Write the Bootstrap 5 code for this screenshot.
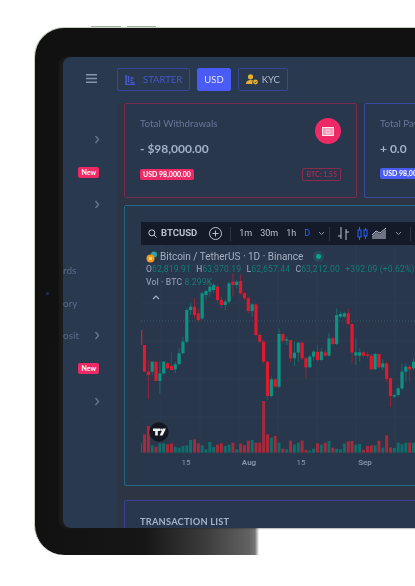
<!DOCTYPE html>
<html lang="en">
<head>
    <meta charset="UTF-8">
    <meta name="viewport" content="width=device-width, initial-scale=1.0">
    <title>Dashboard</title>
    <link href="https://cdn.jsdelivr.net/npm/bootstrap@5.3.0/dist/css/bootstrap.min.css" rel="stylesheet">
    <style>
        html, body { height: 586px; overflow: hidden; background: #fff; }
        body { font-family: Lato, "Open Sans", sans-serif; }
        .tablet-wrap { padding: 27px 0 0 34px; width: 415px; overflow: hidden; filter: blur(.45px); }
        .tablet {
            position: relative;
            width: 520px;
            height: 528px;
            padding: 29px 0 27px 28px;
            border-radius: 30px 0 0 30px;
            border-top: 1px solid #c4d0c0;
            border-left: 1px solid #c4d0c0;
            background:
                linear-gradient(#111, #111) top / 100% 60% no-repeat,
                linear-gradient(90deg, #111 0, #161616 110px, #3c3c3c 170px, #626262 214px, #747474 220px, transparent 224px) bottom / 100% 41% no-repeat;
        }
        .side-btn { position: absolute; top: -2px; height: 1px; background: #a4b2a2; }
        .side-btn-a { left: 56px; width: 30px; }
        .side-btn-b { left: 92px; width: 29px; }
        .camera { position: absolute; left: 11px; top: 264px; width: 3px; height: 3px; border-radius: 50%; background: #22305e; }
        .screen { height: 471px; border-radius: 8px 0 0 8px; overflow: hidden; background: #29394f; box-shadow: -4px 0 2px #1c1c1c; }
        .side-col { width: 54px; flex-shrink: 0; padding-top: 66px; }
        .menu-row { height: 32.75px; padding-right: 17px; font-size: 10px; color: #5a6b8a; }
        .menu-text { font-size: 10px; }
        .new-tag { background: #ee2a66; font-size: 7px; padding: 2px 3px; border-radius: 2px; font-weight: 700; margin-right: 1px; }
        .top-row { height: 46px; padding-top: 11px; }
        .top-gap { gap: 7px; }
        .top-btn { height: 23px; padding: 0 7px; font-size: 9.5px; line-height: 1; border: 1px solid #364698; border-radius: 2px; color: #4658cc; }
        .top-btn-on { background: #4a5cf5; border-color: #4a5cf5; color: #dfe3ff; padding: 0 6px; }
        .top-btn-kyc { color: #b3bdd0; }
        .main-col { flex-grow: 1; min-width: 0; }
        .body-area { height: 425px; padding: 0 0 0 7px; background: #2d3444; }
        .stat-card { width: 233px; height: 95px; flex-shrink: 0; padding: 12px 15px 0; background: #28374b; border-radius: 2px; border: 1px solid #7a2a50; }
        .stat-card-blue { border-color: #3a4aa0; }
        .stat-title { font-size: 9.8px; color: #67779a; }
        .stat-value { font-size: 12px; font-weight: 700; color: #a3b1c9; margin-top: 9px; }
        .coin-circle { width: 26px; height: 26px; background: #ee2a66; margin-top: 2px; }
        .stat-foot { margin-top: 10px; }
        .stat-tag { font-size: 7px; padding: 2px 3px; border-radius: 2px; background: #ee2a66; font-weight: 700; }
        .stat-tag-blue { background: #4a5cf5; }
        .stat-tag-line { font-size: 7px; padding: 2px 3px; border-radius: 2px; border: 1px solid #8a2a50; color: #a82a55; font-weight: 700; background: none; }
        .chart-card { width: 400px; height: 281px; margin-top: 7px; padding: 16px; background: #28374b; border: 1px solid #1d6a85; border-radius: 2px; }
        .chart-bar { height: 23px; padding-left: 7px; background: #141a27; color: #b9c1d0; font-size: 9.5px; font-family: Roboto, sans-serif; white-space: nowrap; }
        .bar-sep { width: 1px; height: 14px; background: #2e3442; }
        .bar-time { font-size: 9px; }
        .bar-on { color: #2962ff; }
        .bar-plus { margin: 0 8px 0 12px; }
        .chart-wrap { position: relative; height: 226px; }
        .chart-legend { position: absolute; left: 5px; top: 5px; font-family: Roboto, sans-serif; white-space: nowrap; }
        .legend-name { font-size: 10px; color: #a6afc2; line-height: 13px; }
        .legend-name svg { margin-right: 2px; }
        .legend-line { font-size: 8.6px; line-height: 13px; color: #8b96ac; letter-spacing: .12px; }
        .legend-line i { font-style: normal; color: #127f70; margin-right: 3px; }
        .legend-line b { font-weight: 500; }
        .legend-fold { margin: 6px 0 0 6px; }
        .live-dot { width: 5px; height: 5px; border-radius: 50%; background: #12a088; box-shadow: 0 0 0 3px rgba(18, 160, 136, .2); margin-left: 13px; }
        .list-card { width: 400px; height: 60px; margin-top: 14px; padding: 14px 15px; background: #28374b; border: 1px solid #3b3f9c; border-radius: 2px; }
        .list-title { font-size: 9.3px; font-weight: 700; color: #a3b1c9; letter-spacing: .2px; }
        .burger-icon { position: absolute; left: 51px; top: 46px; }
    </style>
</head>
<body>
    <div class="tablet-wrap">
        <div class="tablet">
            <span class="side-btn side-btn-a"></span>
            <span class="side-btn side-btn-b"></span>
            <span class="camera"></span>
            <svg class="burger-icon" width="11" height="9" viewBox="0 0 11 9"><path d="M0 .8h11M0 4.5h11M0 8.2h11" stroke="#8796ad" stroke-width="1.4"/></svg>
            <div class="screen d-flex">
                <div class="side-col">
                    <div class="menu-row d-flex align-items-center justify-content-end">
                        <svg width="6" height="9" viewBox="0 0 6 9"><path d="M1.5 1l3 3.5-3 3.5" fill="none" stroke="#66768f" stroke-width="1.4"/></svg>
                    </div>
                    <div class="menu-row d-flex align-items-center justify-content-end">
                        <span class="badge new-tag">New</span>
                    </div>
                    <div class="menu-row d-flex align-items-center justify-content-end">
                        <svg width="6" height="9" viewBox="0 0 6 9"><path d="M1.5 1l3 3.5-3 3.5" fill="none" stroke="#66768f" stroke-width="1.4"/></svg>
                    </div>
                    <div class="menu-row"></div>
                    <div class="menu-row d-flex align-items-center"><span class="menu-text">rds</span></div>
                    <div class="menu-row d-flex align-items-center"><span class="menu-text">ory</span></div>
                    <div class="menu-row d-flex align-items-center justify-content-between">
                        <span class="menu-text">osit</span>
                        <svg width="6" height="9" viewBox="0 0 6 9"><path d="M1.5 1l3 3.5-3 3.5" fill="none" stroke="#66768f" stroke-width="1.4"/></svg>
                    </div>
                    <div class="menu-row d-flex align-items-center justify-content-end">
                        <span class="badge new-tag">New</span>
                    </div>
                    <div class="menu-row d-flex align-items-center justify-content-end">
                        <svg width="6" height="9" viewBox="0 0 6 9"><path d="M1.5 1l3 3.5-3 3.5" fill="none" stroke="#66768f" stroke-width="1.4"/></svg>
                    </div>
                </div>
                <div class="main-col">
                    <div class="top-row d-flex top-gap">
                        <button class="btn top-btn d-flex align-items-center gap-1">
                            <svg width="10" height="10" viewBox="0 0 10 10" class="me-1"><path d="M1 0v9.5h9M3.5 1v6.5M5.5 3h3M5.5 5.3h2M5.5 7.5h4" fill="none" stroke="#4658cc" stroke-width="1.6"/></svg>
                            STARTER
                        </button>
                        <button class="btn top-btn top-btn-on">USD</button>
                        <button class="btn top-btn top-btn-kyc d-flex align-items-center gap-1">
                            <svg width="12" height="11" viewBox="0 0 12 11"><circle cx="4.5" cy="2.8" r="2.6" fill="#e6ae2c"/><path d="M0 10c0-3 2-4 4.5-4 1 0 2 .2 2.6.7A3 3 0 0 0 6.5 10z" fill="#e6ae2c"/><circle cx="9.5" cy="8" r="2.4" fill="#e6ae2c"/><path d="M8.5 8l.8.8 1.2-1.3" fill="none" stroke="#29394f" stroke-width=".8"/></svg>
                            KYC
                        </button>
                    </div>
                    <div class="body-area">
                        <div class="d-flex top-gap">
                            <div class="stat-card">
                                <div class="d-flex justify-content-between">
                                    <div>
                                        <div class="stat-title">Total Withdrawals</div>
                                        <div class="stat-value">- $98,000.00</div>
                                    </div>
                                    <div class="coin-circle rounded-circle d-flex align-items-center justify-content-center">
                                        <svg width="12" height="9" viewBox="0 0 12 9"><rect x=".5" y=".5" width="11" height="8" fill="#f59ab8" stroke="#ffe4ec"/><circle cx="6" cy="4.5" r="2" fill="none" stroke="#ffe4ec" stroke-width=".8"/></svg>
                                    </div>
                                </div>
                                <div class="d-flex justify-content-between align-items-center stat-foot">
                                    <span class="badge stat-tag">USD 98,000.00</span>
                                    <span class="badge stat-tag-line">BTC: 1.55</span>
                                </div>
                            </div>
                            <div class="stat-card stat-card-blue">
                                <div class="stat-title">Total Payouts</div>
                                <div class="stat-value">+ 0.0</div>
                                <div class="d-flex stat-foot">
                                    <span class="badge stat-tag stat-tag-blue">USD 98,000.00</span>
                                </div>
                            </div>
                        </div>
                        <div class="chart-card">
                            <div class="chart-bar d-flex align-items-center">
                                <svg width="9" height="9" viewBox="0 0 9 9" class="me-1"><circle cx="3.8" cy="3.8" r="3" fill="none" stroke="#c4cad6" stroke-width="1"/><path d="M6 6l2.6 2.6" stroke="#c4cad6" stroke-width="1"/></svg>
                                <b>BTCUSD</b>
                                <svg width="13" height="13" viewBox="0 0 13 13" class="bar-plus"><circle cx="6.5" cy="6.5" r="6" fill="none" stroke="#b9c1d0"/><path d="M6.5 3.5v6M3.5 6.5h6" stroke="#b9c1d0"/></svg>
                                <span class="bar-sep"></span>
                                <span class="ms-2 bar-time">1m</span>
                                <span class="ms-2 bar-time">30m</span>
                                <span class="ms-2 bar-time">1h</span>
                                <span class="ms-2 bar-time bar-on">D</span>
                                <svg width="7" height="5" viewBox="0 0 7 5" class="ms-2"><path d="M1 1l2.5 2.5L6 1" fill="none" stroke="#8c94a4"/></svg>
                                <span class="bar-sep ms-1"></span>
                                <svg width="11" height="13" viewBox="0 0 11 13" class="ms-2"><path d="M3 0v12M0 9h3M8 2v11M8 5h3" fill="none" stroke="#b9c1d0"/></svg>
                                <svg width="11" height="13" viewBox="0 0 11 13" class="ms-2"><path d="M2.5 0v13M8.5 1v11" stroke="#2962ff"/><rect x="1" y="3" width="3" height="7" fill="#141a27" stroke="#2962ff"/><rect x="7" y="3" width="3" height="6" fill="#141a27" stroke="#2962ff"/></svg>
                                <svg width="15" height="11" viewBox="0 0 15 11" class="ms-1"><path d="M0 11V8l4-4 4 2 6-5v10z" fill="#6d7484"/><path d="M0 7l4-4 4 2 6-5" fill="none" stroke="#b9c1d0"/></svg>
                                <svg width="7" height="5" viewBox="0 0 7 5" class="ms-2"><path d="M1 1l2.5 2.5L6 1" fill="none" stroke="#8c94a4"/></svg>
                                <span class="bar-sep ms-2"></span>
                            </div>
                            <div class="chart-wrap">
                                <svg id="priceChart" class="d-block" width="300" height="226" viewBox="0 0 300 226"></svg>
                                <div class="chart-legend">
                                    <div class="legend-name d-flex align-items-center">
                                        <svg width="12" height="12" viewBox="0 0 12 12"><circle cx="8" cy="3.5" r="3" fill="#2aa7a0"/><circle cx="4.5" cy="7.5" r="4" fill="#f39a1f"/><rect x="3" y="6" width="3" height="3" fill="#f9d278"/></svg>
                                        Bitcoin / TetherUS · 1D · Binance
                                        <span class="live-dot"></span>
                                    </div>
                                    <div class="legend-line"><b>O</b><i>62,819.91</i> <b>H</b><i>63,970.19</i> <b>L</b><i>62,657.44</i> <b>C</b><i>63,212.00</i> <i>+392.09 (+0.62%)</i></div>
                                    <div class="legend-line"><b>Vol · BTC</b> <i>8.299K</i></div>
                                    <svg width="8" height="5" viewBox="0 0 8 5" class="legend-fold d-block"><path d="M1 4l3-3 3 3" fill="none" stroke="#a6afc2" stroke-width="1.2"/></svg>
                                </div>
                            </div>
                        </div>
                        <div class="list-card">
                            <div class="list-title">TRANSACTION LIST</div>
                        </div>
                    </div>
                </div>
            </div>
        </div>
    </div>

    <script src="https://cdn.jsdelivr.net/npm/bootstrap@5.3.0/dist/js/bootstrap.bundle.min.js"></script>
    <script>
        // candles: color, body top, body bottom, wick top, wick bottom
        const candles = [
            ['r',30,75,30,80],['r',75,155,75,155],['r',155,165,120,238],['g',125,155,125,165],['r',125,183,125,183],
            ['g',160,183,125,220],['g',125,160,125,165],['r',130,145,125,145],['r',138,150,95,150],['g',133,148,125,160],
            ['g',100,133,85,133],['g',65,100,50,100],['g',-30,65,-35,70],['g',-40,-30,-50,-15],['r',-40,-15,-65,-5],
            ['r',-20,0,-35,5],['g',-80,-5,-85,0],['g',-87,-75,-90,-60],['g',-100,-85,-115,-70],['g',-105,-90,-110,-80],
            ['r',-100,-60,-105,-55],['r',-60,-45,-70,-35],['g',-55,-45,-60,-30],['g',-110,-55,-115,-50],['r',-115,-105,-140,-70],
            ['g',-115,-105,-120,-95],['r',-117,-80,-135,-75],['r',-80,-65,-85,-60],['r',-65,-27,-70,-20],['g',-47,-27,-50,-10],
            ['r',-47,45,-50,48],['r',45,65,40,70],['r',65,125,60,130],['r',125,228,125,240],['g',178,228,170,232],
            ['r',178,200,175,205],['g',42,200,25,205],['r',42,62,40,70],['g',58,62,50,75],['r',60,115,60,125],
            ['g',98,115,65,138],['g',68,98,65,125],['r',68,115,65,120],['r',115,142,110,175],['g',110,142,105,145],
            ['g',95,110,90,122],['r',95,120,75,125],['g',95,120,85,125],['r',97,107,90,110],['g',55,107,40,110],
            ['r',55,72,50,75],['g',-15,72,-35,75],['g',-18,-10,-25,-5],['g',-20,-10,-25,-5],['r',-20,12,-35,15],
            ['r',12,97,10,130],['g',97,107,55,135],['g',97,107,85,125],['r',97,107,92,112],['r',103,107,95,115],
            ['r',107,148,100,150],['g',102,148,98,150],['r',102,142,100,145],['g',130,142,118,150],['r',130,177,125,185],
            ['r',175,228,172,262],['g',225,230,222,233],['g',205,225,200,230],['g',155,205,130,210],['g',140,155,130,185],
            ['r',140,148,135,185],['g',125,145,115,150],['g',70,125,65,128],['r',70,100,65,105]
        ];
        const volumes = [30,55,80,22,18,28,28,25,28,18,15,20,22,38,40,28,22,10,32,18,24,28,20,24,30,10,28,22,36,38,30,30,155,55,45,50,30,12,10,36,24,30,36,8,6,12,28,24,30,35,15,12,10,28,34,35,24,26,8,20,22,22,36,15,52,16,14,30,25,30,30,30,22,10];
        const svg = document.getElementById('priceChart');
        let out = '';

        // grid
        for (let x = 20; x < 300; x += 39) out += `<line x1="${x}" y1="0" x2="${x}" y2="205" stroke="#2c3c50" stroke-width="1"/>`;
        for (let y = 20; y < 205; y += 38) out += `<line x1="0" y1="${y}" x2="300" y2="${y}" stroke="#2c3c50" stroke-width="1"/>`;
        out += '<line x1="0" y1="76" x2="300" y2="76" stroke="#3f6a70" stroke-width=".7" stroke-dasharray="1 2"/>';

        const toX = i => (62 + 11.53 * i) / 3 - 21;
        const toY = v => v / 3 + 75;

        volumes.forEach((h, i) => {
            const c = candles[i][0] === 'g' ? '#0f6e6c' : '#a52a3c';
            out += `<rect x="${toX(i) - 1.5}" y="${(398 - h) / 3 + 75}" width="3" height="${h / 3}" fill="${c}"/>`;
        });
        candles.forEach((d, i) => {
            const c = d[0] === 'g' ? '#0c9382' : '#e2182f';
            const x = toX(i);
            out += `<line x1="${x}" y1="${toY(d[3])}" x2="${x}" y2="${toY(d[4])}" stroke="${c}" stroke-width=".8" opacity=".75"/>`;
            out += `<rect x="${x - 1.6}" y="${toY(d[1])}" width="3.2" height="${Math.max(1, (d[2] - d[1]) / 3)}" fill="${c}"/>`;
        });

        // TradingView badge
        out += '<circle cx="18" cy="187" r="9.7" fill="#131722"/>';
        out += '<path d="M12 183.6h7v2.4h-2.2v4.6h-2.6V186H12z" fill="#f2f3f5"/><circle cx="20.4" cy="184.8" r="1.2" fill="#f2f3f5"/><path d="M22 183.6h3l-3.4 7h-3z" fill="#f2f3f5"/>';

        // time axis
        [['15', 45, 400], ['Aug', 108, 600], ['15', 160, 400], ['Sep', 224, 600]].forEach(t => {
            out += `<text x="${t[1]}" y="220" text-anchor="middle" font-family="Roboto, sans-serif" font-size="8" font-weight="${t[2]}" fill="#8a95ab">${t[0]}</text>`;
        });
        svg.innerHTML = out;
    </script>
</body>
</html>
